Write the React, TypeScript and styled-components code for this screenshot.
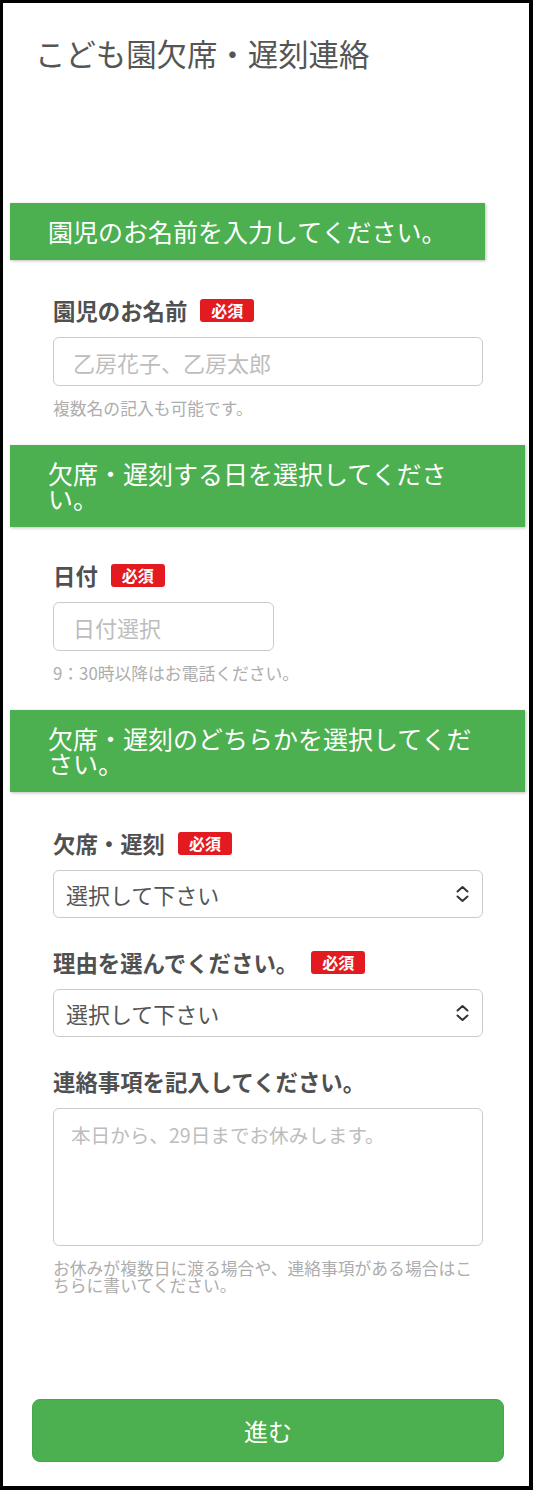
import React from 'react';
import styled, { createGlobalStyle } from 'styled-components';

const colors = {
  green: '#4caf50',
  red: '#e31b21',
  text: '#555555',
  label: '#505050',
  help: '#adadad',
  placeholder: '#bdbdbd',
  border: '#cbcbcb',
};

const fontStack = '"Noto Sans CJK JP", "Noto Sans", "Liberation Sans", sans-serif';

const GlobalStyle = createGlobalStyle`
  html, body {
    margin: 0;
    padding: 0;
    background: #fff;
  }
  * {
    box-sizing: border-box;
  }
`;

const Frame = styled.div`
  display: flex;
  flex-direction: column;
  width: 533px;
  height: 1490px;
  border-style: solid;
  border-color: #000;
  border-width: 3px 4px 4px 3px;
  background: #fff;
  font-family: ${fontStack};
  color: ${colors.text};
`;

const Header = styled.header`
  height: 200px;
  padding: 33px 0 0 32px;
`;

const Title = styled.h1`
  margin: 0;
  font-size: 30.4px;
  line-height: 35px;
  font-weight: 400;
  color: ${colors.text};
`;

const Section = styled.section`
  display: flex;
  flex-direction: column;
`;

const Banner = styled.h2`
  width: fit-content;
  max-width: 515px;
  margin: 0 0 0 7px;
  padding: 16px 38px;
  background: ${colors.green};
  box-shadow: 1px 1px 3px rgba(0, 0, 0, 0.25);
  color: #fff;
  font-size: 25px;
  line-height: 25px;
  font-weight: 400;
`;

const Fields = styled.div<{ $top: number }>`
  display: flex;
  flex-direction: column;
  gap: 32px;
  padding: ${p => p.$top}px 46px 28px 50px;
`;

const Field = styled.div`
  display: flex;
  flex-direction: column;
`;

const LabelRow = styled.div`
  display: flex;
  align-items: center;
  gap: 13px;
  height: 24px;
  margin-bottom: 15px;
`;

const Label = styled.label`
  font-size: 22.4px;
  line-height: 24px;
  font-weight: 700;
  color: ${colors.label};
`;

const Required = styled.span`
  display: inline-block;
  height: 23px;
  padding: 0 11px;
  border-radius: 3px;
  background: ${colors.red};
  color: #fff;
  font-size: 16px;
  line-height: 23px;
  font-weight: 700;
`;

const controlStyle = `
  display: block;
  margin: 0;
  border: 1px solid ${colors.border};
  border-radius: 6px;
  background: #fff;
  font-family: ${fontStack};
  outline: none;
  &::placeholder {
    color: ${colors.placeholder};
    opacity: 1;
  }
`;

const TextInput = styled.input<{ $width?: number }>`
  ${controlStyle}
  width: ${p => (p.$width ? `${p.$width}px` : '100%')};
  height: 49px;
  padding: 0 19px;
  font-size: 22px;
  color: ${colors.text};
`;

const SelectWrap = styled.div`
  position: relative;
`;

const Select = styled.select`
  ${controlStyle}
  appearance: none;
  width: 100%;
  height: 48px;
  padding: 0 40px 0 12px;
  font-size: 22px;
  color: ${colors.text};
`;

const SelectIcon = styled.svg`
  position: absolute;
  top: 50%;
  right: 14px;
  width: 13px;
  height: 17px;
  transform: translateY(-50%);
  pointer-events: none;
`;

const TextArea = styled.textarea`
  ${controlStyle}
  width: 100%;
  height: 138px;
  padding: 13px 17px;
  resize: none;
  font-size: 19.6px;
  line-height: 26px;
  color: ${colors.text};
`;

const Help = styled.p`
  margin: 14px 0 0;
  font-size: 16.8px;
  line-height: 17px;
  color: ${colors.help};
`;

const Footer = styled.footer`
  margin-top: auto;
  padding: 0 25px 24px 29px;
`;

const SubmitButton = styled.button`
  display: block;
  width: 100%;
  height: 63px;
  border: 1px solid #46a54a;
  border-radius: 8px;
  background: ${colors.green};
  color: #fff;
  font-family: ${fontStack};
  font-size: 24px;
  cursor: pointer;
`;

const UpDownIcon = () => (
  <SelectIcon viewBox="0 0 13 17" fill="none" stroke="#333" strokeWidth="2" strokeLinecap="round" strokeLinejoin="round">
    <path d="M1.5 6 L6.5 1.5 L11.5 6" />
    <path d="M1.5 11 L6.5 15.5 L11.5 11" />
  </SelectIcon>
);

const ChoiceSelect = ({ id }: { id: string }) => (
  <SelectWrap>
    <Select id={id} defaultValue="">
      <option value="">選択して下さい</option>
    </Select>
    <UpDownIcon />
  </SelectWrap>
);

const RequiredLabel = ({ htmlFor, children }: { htmlFor: string; children: React.ReactNode }) => (
  <LabelRow>
    <Label htmlFor={htmlFor}>{children}</Label>
    <Required>必須</Required>
  </LabelRow>
);

const App = () => (
  <>
    <GlobalStyle />
    <Frame lang="ja">
      <Header>
        <Title>こども園欠席・遅刻連絡</Title>
      </Header>

      <Section>
        <Banner>園児のお名前を入力してください。</Banner>
        <Fields $top={38}>
          <Field>
            <RequiredLabel htmlFor="name">園児のお名前</RequiredLabel>
            <TextInput id="name" placeholder="乙房花子、乙房太郎" />
            <Help>複数名の記入も可能です。</Help>
          </Field>
        </Fields>
      </Section>

      <Section>
        <Banner>欠席・遅刻する日を選択してください。</Banner>
        <Fields $top={36}>
          <Field>
            <RequiredLabel htmlFor="date">日付</RequiredLabel>
            <TextInput id="date" $width={221} placeholder="日付選択" />
            <Help>9：30時以降はお電話ください。</Help>
          </Field>
        </Fields>
      </Section>

      <Section>
        <Banner>欠席・遅刻のどちらかを選択してください。</Banner>
        <Fields $top={39}>
          <Field>
            <RequiredLabel htmlFor="kind">欠席・遅刻</RequiredLabel>
            <ChoiceSelect id="kind" />
          </Field>
          <Field>
            <RequiredLabel htmlFor="reason">理由を選んでください。</RequiredLabel>
            <ChoiceSelect id="reason" />
          </Field>
          <Field>
            <LabelRow>
              <Label htmlFor="note">連絡事項を記入してください。</Label>
            </LabelRow>
            <TextArea id="note" placeholder="本日から、29日までお休みします。" />
            <Help>お休みが複数日に渡る場合や、連絡事項がある場合はこちらに書いてください。</Help>
          </Field>
        </Fields>
      </Section>

      <Footer>
        <SubmitButton type="button">進む</SubmitButton>
      </Footer>
    </Frame>
  </>
);

export default App;
